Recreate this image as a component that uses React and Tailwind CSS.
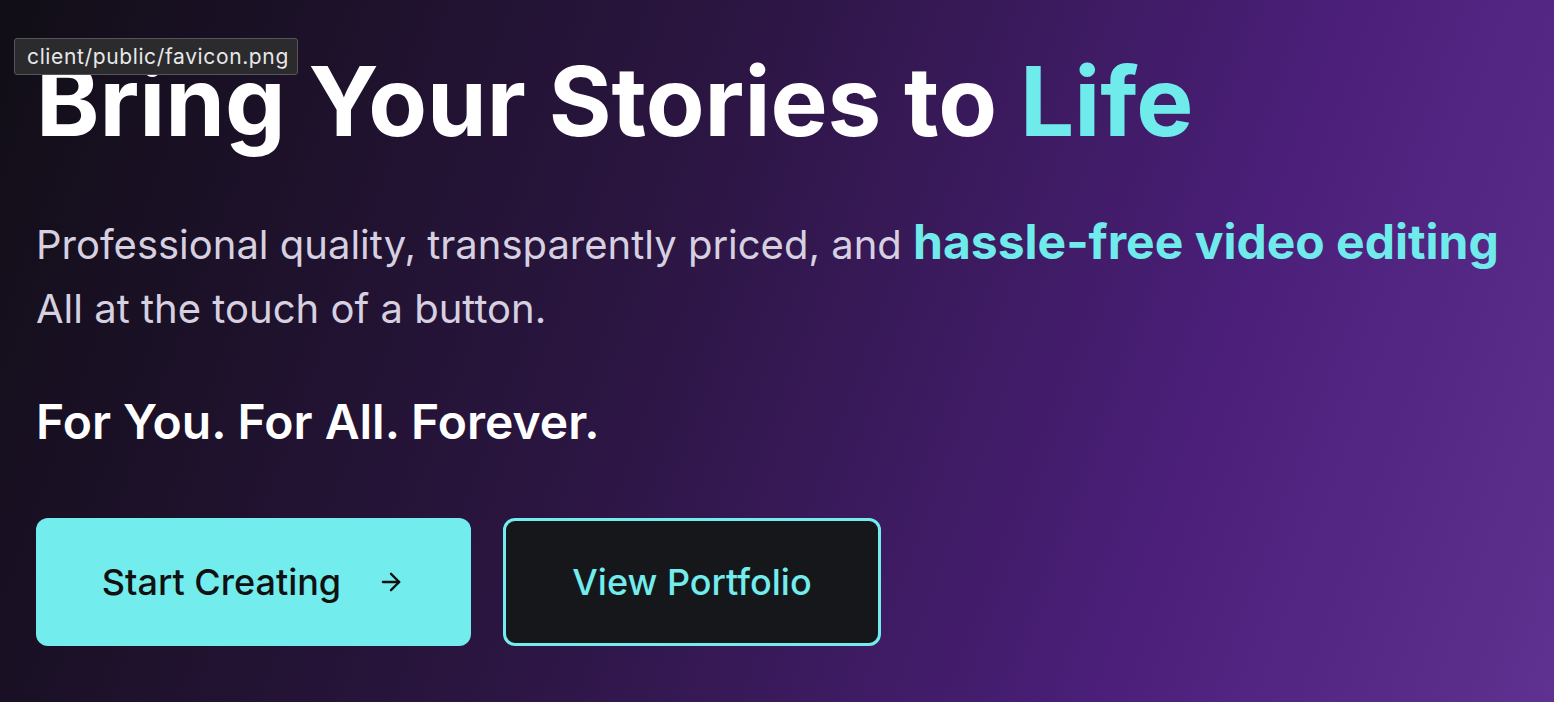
import { ArrowRight } from 'lucide-react';

export default function App() {
  return (
    <div className="relative w-[1554px] h-[702px] overflow-hidden bg-[linear-gradient(110deg,#110e16_0%,#2a1540_40%,#4b1f7a_75%,#5f3190_100%)] font-['Inter',sans-serif]">
      <div className="pl-[36px] pt-[49px]">
        <h1 className="text-[96px] leading-[1.1] font-bold text-white">
          Bring Your Stories to <span className="text-[#70ebeb]">Life</span>
        </h1>
        <p className="mt-[58px] text-[40px] leading-[64px] text-[#d6d0e0]">
          Professional quality, transparently priced, and{' '}
          <span className="text-[48px] leading-[48px] font-bold text-[#70ebeb]">hassle-free video editing</span>
          <br />
          All at the touch of a button.
        </p>
        <p className="mt-[51px] text-[48px] leading-[60px] font-semibold text-white">
          For You. For All. Forever.
        </p>
        <div className="mt-[66px] flex gap-8">
          <button className="w-[435px] h-[128px] rounded-xl bg-[#72ecec] text-[#111] text-[36px] font-medium flex items-center justify-center gap-9">
            Start Creating
            <ArrowRight className="w-7 h-7" strokeWidth={2} />
          </button>
          <button className="w-[378px] h-[128px] rounded-xl border-[3px] border-[#72ecec] bg-[#15171b] text-[#72ecec] text-[36px] font-medium flex items-center justify-center">
            View Portfolio
          </button>
        </div>
      </div>
      <div className="absolute left-[14px] top-[38px] w-[284px] h-[37px] px-[12px] flex items-center bg-[#2b2b2e] border border-[#55555a] rounded-[3px] text-[#e8e8e8] text-[21px] tracking-[0.03em]">
        client/public/favicon.png
      </div>
    </div>
  );
}
